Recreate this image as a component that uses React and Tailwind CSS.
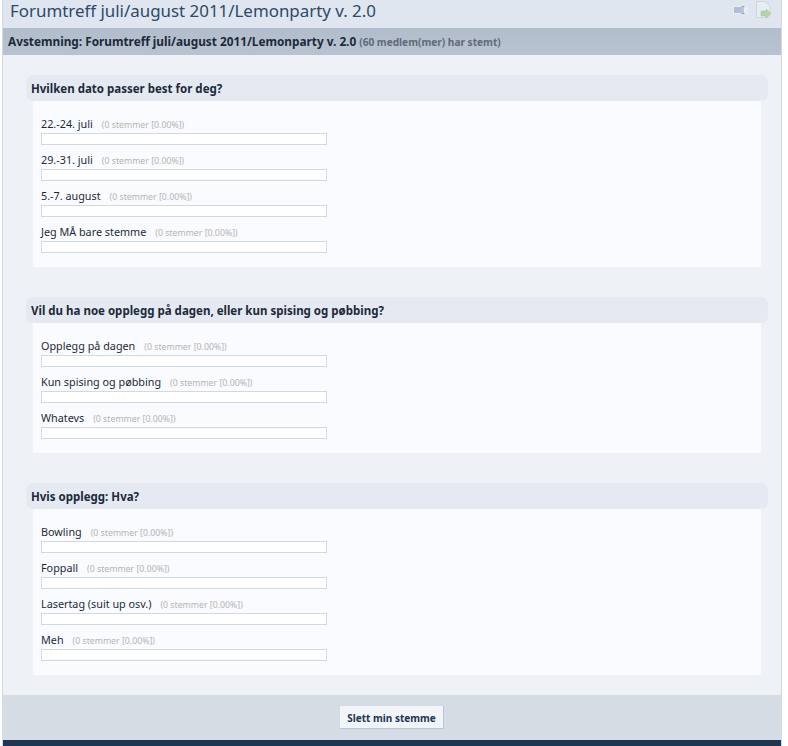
import React from 'react';

const polls = [
  {
    question: 'Hvilken dato passer best for deg?',
    choices: ['22.-24. juli', '29.-31. juli', '5.-7. august', 'Jeg MÅ bare stemme'],
  },
  {
    question: 'Vil du ha noe opplegg på dagen, eller kun spising og pøbbing?',
    choices: ['Opplegg på dagen', 'Kun spising og pøbbing', 'Whatevs'],
  },
  {
    question: 'Hvis opplegg: Hva?',
    choices: ['Bowling', 'Foppall', 'Lasertag (suit up osv.)', 'Meh'],
  },
];

const Choice = ({ label }) => (
  <div className="h-[36px] flex flex-col justify-end">
    <div className="flex items-baseline h-[17px]">
      <span className="text-[10.8px] text-[#1c2a38]">{label}</span>
      <span className="ml-[9px] text-[8.75px] text-[#b4b4b4]">(0 stemmer [0.00%])</span>
    </div>
    <div className="w-[286px] h-[12px] bg-white border border-[#d0d9e4]" />
  </div>
);

const Poll = ({ question, choices }) => (
  <div className="mb-[30px] last:mb-0">
    <div className="h-[26px] flex items-center pl-[5px] pt-[1px] rounded-[7px] bg-[#e4e9f2]">
      <h3 className="text-[11.5px] font-bold text-[#1c2a38]">{question}</h3>
    </div>
    <div className="mx-[7px] pl-[8px] pt-[8px] pb-[14px] bg-[#fafbfe]">
      {choices.map((choice) => (
        <Choice key={choice} label={choice} />
      ))}
    </div>
  </div>
);

export default function App() {
  return (
    <div className="w-[788px] h-[746px] bg-white overflow-hidden font-['Noto_Sans',sans-serif]">
      <div className="ml-[2px] w-[780px] h-[746px] flex flex-col border-l border-r border-[#d0d9e4]">
        <div className="h-[28px] flex items-start justify-between bg-[#e0e6f0] pl-[7px] pr-[9px]">
          <h1 className="text-[16.9px] leading-[22px] text-[#2d4a68]">Forumtreff juli/august 2011/Lemonparty v. 2.0</h1>
          <div className="flex items-center gap-[8px] pt-[1px]">
            <svg width="15" height="8" viewBox="0 0 15 8">
              <rect x="0" y="0" width="15" height="8" fill="#e8ecf3" />
              <rect x="1" y="1" width="8" height="6" fill="#aebfdc" />
              <path d="M8.5 0.5h3M10 0.5v7M8.5 7.5h3" stroke="#9aa3ad" fill="none" />
            </svg>
            <svg width="16" height="17" viewBox="0 0 16 17">
              <path d="M0.5 0.5h9l4.5 4.5v11.5h-13.5z" fill="#e8edf3" stroke="#cfd6df" />
              <path d="M5 10h5V8l5 4.5-5 4.5v-2H5z" fill="#b5d3a8" stroke="#a3c496" strokeWidth="0.5" />
            </svg>
          </div>
        </div>
        <div className="h-[27px] flex items-center pl-[5px] bg-gradient-to-b from-[#b2bdcb] to-[#b8c3d1]">
          <h2 className="text-[11.8px] font-bold text-[#1c2a38]">
            Avstemning: Forumtreff juli/august 2011/Lemonparty v. 2.0{' '}
            <span className="text-[10.1px] text-[#5f6b78]">(60 medlem(mer) har stemt)</span>
          </h2>
        </div>
        <div className="h-[640px] bg-[#eef2f7] pt-[20px] pl-[23px] pr-[13px]">
          {polls.map((poll) => (
            <Poll key={poll.question} question={poll.question} choices={poll.choices} />
          ))}
        </div>
        <div className="h-[45px] flex items-center justify-center bg-[#d5dce3]">
          <button className="h-[23px] w-[104px] pt-[2px] bg-[#f1f4f8] border-b border-r border-[#bcc6d2] text-[10px] font-bold text-[#1d3652]">
            Slett min stemme
          </button>
        </div>
        <div className="h-[6px] bg-[#1d3652]" />
      </div>
    </div>
  );
}
